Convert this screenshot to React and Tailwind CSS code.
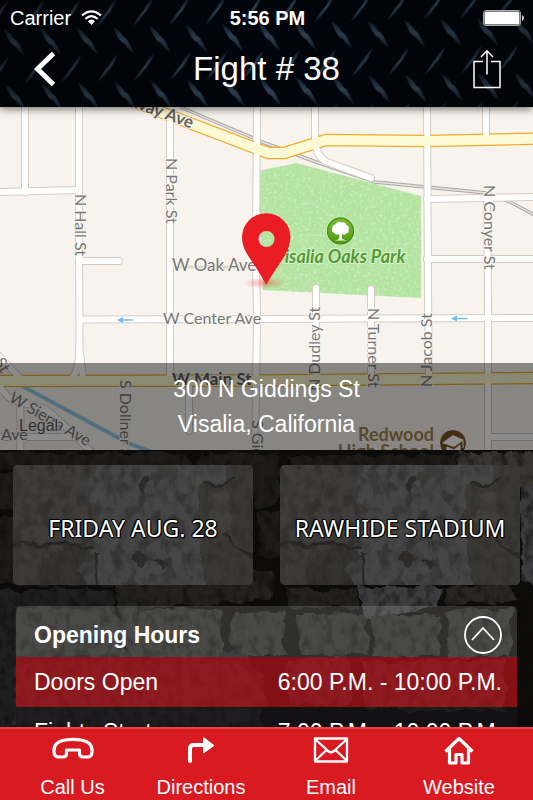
import React from "react";

function DiamondPlate() {
  return (
    <svg className="absolute inset-0 h-full w-full" aria-hidden="true">
      <defs>
        <linearGradient id="blade" x1="0" y1="0" x2="0" y2="1">
          <stop offset="0" stopColor="#0d1a2a" />
          <stop offset="0.45" stopColor="#304255" />
          <stop offset="0.65" stopColor="#263647" />
          <stop offset="1" stopColor="#0b1522" />
        </linearGradient>
        <pattern id="plate" width="36.4" height="55" patternUnits="userSpaceOnUse" patternTransform="rotate(-1.3)">
          <path d="M44 1.500Q38 6 35 12.500L32 16Q28 20 22 30Q29 25 32.500 19.500L35.500 16Q40 11 44 1.500Z" fill="url(#blade)" />
          <path d="M7.600 1.500Q1.600 6 -1.400 12.500L-4.400 16Q-8.400 20 -14.400 30Q-7.400 25 -3.900 19.500L-0.900 16Q3.600 11 7.600 1.500Z" fill="url(#blade)" />
          <path d="M3 29Q10 33 13.500 39.500L16.500 42Q20 47 24 57Q18 53 14.500 47L11 44.500Q7 40 3 29Z" fill="url(#blade)" />
          <path d="M3 -26Q10 -22 13.500 -15.500L16.500 -13Q20 -8 24 2Q18 -2 14.500 -8L11 -10.500Q7 -15 3 -26Z" fill="url(#blade)" />
        </pattern>
        <linearGradient id="plateShade" x1="0" y1="0" x2="1" y2="0">
          <stop offset="0" stopColor="#000" stopOpacity="0.35" />
          <stop offset="0.5" stopColor="#000" stopOpacity="0" />
          <stop offset="1" stopColor="#000" stopOpacity="0.3" />
        </linearGradient>
      </defs>
      <rect width="100%" height="100%" fill="#02050c" />
      <rect width="100%" height="100%" fill="url(#plate)" />
      <rect width="100%" height="100%" fill="url(#plateShade)" />
    </svg>
  );
}

function Wifi() {
  return (
    <svg width="21" height="15" viewBox="0 0 21 15" aria-hidden="true">
      <g fill="none" stroke="#fff" strokeWidth="2.2">
        <path d="M1 5.500Q10.500 -2.800 20 5.500" />
        <path d="M4.300 9Q10.500 3.300 16.700 9" />
      </g>
      <path d="M6.900 11.200Q10.500 7.800 14.100 11.200L10.500 15Z" fill="#fff" />
    </svg>
  );
}

function Battery() {
  return (
    <svg width="42" height="16" viewBox="0 0 42 16" aria-hidden="true">
      <rect x="0.500" y="0.500" width="37" height="15" rx="2.500" fill="none" stroke="#aaa" />
      <rect x="1.500" y="1.500" width="35" height="13" rx="1.500" fill="#fff" />
      <path d="M39 5Q41 6 41 8T39 11Z" fill="#ddd" />
    </svg>
  );
}

function Header() {
  return (
    <header className="relative z-10 h-[107px] shrink-0 text-white shadow-[0_2px_8px_rgba(0,0,0,0.55)]">
      <DiamondPlate />
      <div className="relative grid h-[35px] grid-cols-3 items-center pr-2 pl-[10px] text-[20px] leading-6">
        <span className="flex items-center gap-[10px]">
          Carrier <Wifi />
        </span>
        <span className="text-center font-bold">5:56 PM</span>
        <span className="flex justify-end">
          <Battery />
        </span>
      </div>
      <div className="relative grid h-[67px] grid-cols-[64px_1fr_64px] items-center">
        <button aria-label="Back" className="flex justify-end pr-[8px]">
          <svg width="22" height="34" viewBox="0 0 22 34" aria-hidden="true">
            <path d="M19.500 1.500L3.500 17L19.500 32.500" fill="none" stroke="#fff" strokeWidth="5" />
          </svg>
        </button>
        <h1 className="text-center text-[33px] leading-10">Fight # 38</h1>
        <button aria-label="Share" className="flex pl-1">
          <svg width="28" height="40" viewBox="0 0 28 40" fill="none" stroke="#fff" aria-hidden="true">
            <path d="M10 12.500H1V38.500H27V12.500H18" strokeWidth="1.500" />
            <path d="M14 25.500V2M8 8L14 1.800L20 8" strokeWidth="1.500" />
          </svg>
        </button>
      </div>
    </header>
  );
}

const roads = [
  "M25 100V192",
  "M79 100V192L79.500 350L83 377M79 345Q80 370 72 378",
  "M170 118V377",
  "M257 100L256 255L257 320L255 460",
  "M315 100V140Q316 157 327 162L371 178",
  "M427 100L428 290L429 377",
  "M486 100V138",
  "M487 198L488 300V460",
  "M0 192L78 190",
  "M79 261H119",
  "M81 319.500L533 318",
  "M427 199L533 197",
  "M427 259H533",
  "M316 288V377",
  "M371 289V377",
  "M189 387V431",
  "M-2 355L20 378",
  "M-4 382L8 397L20 402Q21 420 20 460M17 401L45 409Q60 420 95 456",
  "M0 437H80",
  "M488 437H540",
];

function MapArt() {
  const upper = "M124 98L268 153H284L326 140L427 141L540 138.500";
  const main = "M-5 381L250 380.500L540 378";
  return (
    <svg className="block h-full w-full" viewBox="0 107 533 343" preserveAspectRatio="xMidYMid slice" role="img" aria-label="Street map of Visalia">
      <defs>
        <filter id="grass" x="0" y="0" width="100%" height="100%">
          <feTurbulence type="fractalNoise" baseFrequency="0.350" numOctaves="2" seed="4" />
          <feColorMatrix values="0 0 0 0 0.86  0 0 0 0 0.96  0 0 0 0 0.8  0 0 0 3 -1.500" />
          <feComposite in2="SourceGraphic" operator="in" />
        </filter>
        <linearGradient id="tree" x1="0" y1="0" x2="0" y2="1">
          <stop offset="0" stopColor="#7cc03a" />
          <stop offset="1" stopColor="#4d9a10" />
        </linearGradient>
        <radialGradient id="pinGlow">
          <stop offset="0" stopColor="#e22" stopOpacity="0.400" />
          <stop offset="1" stopColor="#e22" stopOpacity="0" />
        </radialGradient>
      </defs>
      <rect y="100" width="533" height="360" fill="#f8f4ed" />
      <path d="M258 171L296 163L421 196V298L263 290Z" fill="#b5e4a2" />
      <path d="M258 171L296 163L421 196V298L263 290Z" fill="#fff" filter="url(#grass)" opacity="0.450" />
      <g fill="none">
        <path d="M180 107L265 143L316 162L375 182L426 187L487 193L512 203L540 218" stroke="#aaa9a7" strokeWidth="3.500" />
        <path d="M180 107L265 143L316 162L375 182L426 187L487 193L512 203L540 218" stroke="#e6e2dd" strokeWidth="1.400" />
        <path d="M22 386L128 443L160 455" stroke="#91cbe6" strokeWidth="4" />
        <path d="M168 267H256" stroke="#ddd5cc" strokeWidth="3" />
        <g strokeLinecap="round" strokeLinejoin="round" stroke="#d5cbc3" strokeWidth="8">
          {roads.map((d) => <path key={d} d={d} />)}
        </g>
        <path d={upper} stroke="#efab2d" strokeWidth="12.500" />
        <path d={main} stroke="#efab2d" strokeWidth="12.500" />
        <g strokeLinecap="round" strokeLinejoin="round" stroke="#fff" strokeWidth="6">
          {roads.map((d) => <path key={d} d={d} />)}
        </g>
        <path d={upper} stroke="#fcfad4" strokeWidth="10" />
        <path d={main} stroke="#fcfad4" strokeWidth="10" />
      </g>
      <g fill="#6ebdf2">
        <path d="M117 320L123 317V319.200H133V320.800H123V323Z" />
        <path d="M451 318.500L457 315.500V317.700H467V319.300H457V321.500Z" />
      </g>
      <g fill="#77777a" stroke="#f9f6f0" strokeWidth="2" paintOrder="stroke" fontSize="16" className="font-['Lato',sans-serif]">
        <text x="172" y="271" fontSize="17">W Oak Ave</text>
        <text x="163" y="324">W Center Ave</text>
        <text transform="translate(75 194) rotate(90)">N Hall St</text>
        <text transform="translate(166 158) rotate(90)">N Park St</text>
        <text transform="translate(484 185) rotate(90)">N Conyer St</text>
        <text transform="translate(320 391) rotate(-90)">N Dudley St</text>
        <text transform="translate(368 308) rotate(90)">N Turner St</text>
        <text transform="translate(432 387) rotate(-90)">N Jacob St</text>
        <text transform="translate(120 380) rotate(90)">S Dollner St</text>
        <text transform="translate(252 420) rotate(90)">S Giddings</text>
        <text transform="translate(-6 362) rotate(58)">St</text>
        <text transform="translate(8 401) rotate(30)">W Sierra Ave</text>
        <text x="1" y="440">Ave</text>
        <text x="19" y="431" fill="#555" className="font-['Liberation_Sans',sans-serif]">Legal</text>
        <text x="172" y="385" fontSize="17" fontWeight="700" fill="#5c5c5f">W Main St</text>
        <text transform="translate(132 107) rotate(20)" fontSize="17" fontWeight="700" fill="#66645c">way Ave</text>
        <text x="273" y="263" fontSize="18" fontWeight="700" fontStyle="italic" fill="#559a34" stroke="#d9f2cd">Visalia Oaks Park</text>
        <g fill="#a28350" fontSize="18" fontWeight="700" textAnchor="end">
          <text x="434" y="441">Redwood</text>
          <text x="434" y="458">High School</text>
        </g>
      </g>
      <g transform="translate(340.500 231)">
        <circle r="14" fill="#fff" />
        <circle r="13" fill="url(#tree)" stroke="#4a9114" strokeWidth="1.500" />
        <path d="M-1.500 8V3Q-5 5 -6 2Q-10 1 -8 -2.500Q-9 -6 -5 -6.500Q-3 -10.500 1 -8.500Q5 -9.500 6 -6Q9.500 -5 8 -1.500Q9 2 5.500 2.500Q4 5 1.500 3V8Q4 8.500 6 9.500H-6Q-3 9 -1.500 8Z" fill="#fff" />
      </g>
      <g transform="translate(453 443)">
        <circle r="13.500" fill="#795426" stroke="#fff" strokeWidth="1" />
        <path d="M-11 0L0 -8L11 -3L1 4Z" fill="#fff" />
        <path d="M-6 4L1 7L7 2V8Q0 13 -6 8ZM10 -2V5" fill="#fff" stroke="#fff" />
      </g>
      <ellipse cx="265" cy="283" rx="22" ry="6" fill="url(#pinGlow)" />
      <path fillRule="evenodd" d="M266 285Q263 278 249 257Q242 247 242 237A24 23.500 0 0 1 290.500 237Q290 247 284 257Q270 278 266 285ZM266.500 231A8 8 0 1 0 266.500 247A8 8 0 1 0 266.500 231Z" fill="#eb1d24" />
    </svg>
  );
}

function MapSection() {
  return (
    <section className="relative h-[343px] shrink-0 overflow-hidden">
      <MapArt />
      <address className="absolute inset-x-0 bottom-0 h-[87px] bg-black/45 pt-[9px] text-center text-[23px] leading-[35px] text-white not-italic">
        300 N Giddings St
        <br />
        Visalia, California
      </address>
    </section>
  );
}

function StoneFilters() {
  return (
    <svg width="0" height="0" className="absolute" aria-hidden="true">
      <defs>
        <filter id="rough" x="-5%" y="-5%" width="110%" height="110%" colorInterpolationFilters="sRGB">
          <feTurbulence type="fractalNoise" baseFrequency="0.060" numOctaves="4" seed="8" result="n" />
          <feDisplacementMap in="SourceGraphic" in2="n" scale="12" xChannelSelector="R" yChannelSelector="G" />
        </filter>
        <filter id="grain" x="0" y="0" width="100%" height="100%" colorInterpolationFilters="sRGB">
          <feTurbulence type="fractalNoise" baseFrequency="0.120 0.080" numOctaves="5" seed="3" />
          <feColorMatrix values="0 0 0 0 0.050  0 0 0 0 0.045  0 0 0 0 0.040  3 0 0 0 -1.300" />
        </filter>
        <filter id="flake" x="0" y="0" width="100%" height="100%" colorInterpolationFilters="sRGB">
          <feTurbulence type="fractalNoise" baseFrequency="0.080 0.060" numOctaves="5" seed="21" result="t" />
          <feColorMatrix in="t" values="0 0 0 0 0.190  0 0 0 0 0.185  0 0 0 0 0.170  9 0 0 0 -4.700" result="c" />
          <feComposite in="c" in2="SourceGraphic" operator="in" />
        </filter>
      </defs>
    </svg>
  );
}

function StoneWall() {
  return (
    <svg className="absolute inset-0 h-full w-full" viewBox="0 0 533 277" preserveAspectRatio="xMidYMin slice" aria-hidden="true">
      <rect width="533" height="350" fill="#0d0c0b" />
      <g filter="url(#rough)">
        <g fill="#1c1b19">
          <path d="M-10 2L185 2L192 14L188 22L-10 20ZM-10 24H190V60H-10ZM-10 68H180V135H-10ZM200 3H280L278 55L256 60L250 20H195ZM290 5H455V18L300 28ZM258 62H310L305 115L260 105Z" />
          <path d="M120 140L255 118L273 122L272 147L120 155Z" />
        </g>
        <path d="M-10 140H112L116 168L100 182L10 200V350H-10ZM10 200H250L270 350H0Z" fill="#1f1f20" />
        <path d="M115 135H245L270 120V150L170 155L118 160ZM285 138L355 140L358 158L290 158Z" fill="#22211d" />
        <path d="M455 2H540V60L525 40L500 18H458Z" fill="#37352e" />
        <path d="M355 136H445L438 155L365 170ZM520 35H540V140L525 130Z" fill="#3c3c3e" />
        <path d="M445 138L505 134L520 150L450 155Z" fill="#292722" />
        <path d="M15 158H108L125 175V207H15ZM118 158H222V207H130ZM235 163L285 160V205H245L228 190ZM298 164L365 163L368 205L300 206ZM372 165H438L440 205H374ZM446 160H512V207H448Z" fill="#2a2a27" />
        <path d="M15 212H235L262 225L268 255L250 275H15ZM285 212L350 206L352 255L288 255ZM362 210H505V260H365Z" fill="#2b2827" />
        <path d="M18 280H260V350H18ZM290 280H533V350H290Z" fill="#1b1a1c" />
      </g>
      <rect width="533" height="350" filter="url(#grain)" opacity="0.550" />
    </svg>
  );
}

function CardStone() {
  return (
    <svg className="absolute inset-0 h-full w-full" viewBox="0 0 240 120" preserveAspectRatio="none" aria-hidden="true">
      <rect width="240" height="120" fill="#3c3b3a" />
      <g filter="url(#rough)">
        <path d="M-15 -15H82L78 78H-15Z" fill="#3e3d3c" />
        <path d="M75 -15H215L210 16L190 20L183 45L190 78L192 135H82Z" fill="#464647" />
        <path d="M187 22L212 18L225 -15H260V135H194L188 75L182 50Z" fill="#393833" />
        <path d="M200 28L216 28L218 62L205 75L196 55Z" fill="#41403c" />
        <path d="M27 112Q30 88 55 82Q78 78 85 98V135H30Z" fill="#343331" />
        <path d="M65 102L84 92V124H72Z" fill="#414142" />
        <path d="M-10 82Q50 76 82 84" fill="none" stroke="#292826" strokeWidth="3" />
        <path d="M84 88V125M190 20L210 19L224 10M212 68L230 86L250 94" fill="none" stroke="#292826" strokeWidth="3" />
        <path d="M116 94Q122 86 130 88L134 96L126 102ZM130 10L135 16L133 28L128 18ZM140 96L160 98L150 103Z" fill="#2e2c2a" />
      </g>
      <rect width="180" height="120" fill="#fff" filter="url(#flake)" opacity="0.500" />
      <rect width="240" height="120" filter="url(#grain)" opacity="0.150" />
    </svg>
  );
}

const outline =
  "[text-shadow:1px_0_#000,-1px_0_#000,0_1px_#000,0_-1px_#000,1px_1px_1px_#000,-1px_-1px_1px_#000]";

function InfoCard({ children }) {
  return (
    <div className="relative flex h-[120px] flex-1 items-center justify-center overflow-hidden rounded-[5px]">
      <CardStone />
      <p className={"relative pt-[6px] font-['Noto_Sans',sans-serif] text-[23px] leading-8 whitespace-nowrap text-white " + outline}>
        {children}
      </p>
    </div>
  );
}

function HoursPanel() {
  return (
    <section className="relative mx-4 mt-[21px] overflow-hidden rounded-t-[5px] text-[23px] leading-[50px] text-white">
      <div className="flex h-[51px] items-center justify-between bg-white/15 pt-[6px] pr-[15px] pl-[18px]">
        <h2 className="font-bold">Opening Hours</h2>
        <button aria-label="Collapse opening hours">
          <svg width="38" height="38" viewBox="0 0 38 38" fill="none" stroke="#fff" strokeWidth="1.800" aria-hidden="true">
            <circle cx="19" cy="19" r="18" />
            <path d="M8 24L19 12L30 24" />
          </svg>
        </button>
      </div>
      <dl>
        <div className="flex h-[50px] justify-between bg-[#c3141c]/65 pr-[15px] pl-[18px]">
          <dt>Doors Open</dt>
          <dd>6:00 P.M. - 10:00 P.M.</dd>
        </div>
        <div className="flex h-[50px] justify-between bg-[#17161a]/60 pr-[15px] pl-[18px]">
          <dt>Fights Start</dt>
          <dd>7:00 P.M. - 10:00 P.M.</dd>
        </div>
      </dl>
    </section>
  );
}

const tabs = [
  {
    label: "Call Us",
    icon: (
      <path d="M2 15Q1 5 13 3Q21 1.800 29 3Q41 5 40 15Q40 20 35 20H31Q27.500 20 27.500 16.500V13H14.500V16.500Q14.500 20 11 20H7Q2 20 2 15Z" strokeWidth="3.200" />
    ),
  },
  {
    label: "Directions",
    icon: (
      <>
        <path d="M10 24V11.500Q10 8 13.500 8H25" strokeWidth="4" strokeLinecap="round" />
        <path d="M23.500 0.500L34 8.500L23.500 16Z" fill="#fff" strokeWidth="1" />
      </>
    ),
  },
  {
    label: "Email",
    icon: <path d="M5 1.500H37V24.500H5ZM5 2L18 14Q21 16.500 24 14L37 2M5 24L16.500 13M37 24L25.500 13" strokeWidth="2.300" />,
  },
  {
    label: "Website",
    icon: <path d="M7.500 14.500L21 1.500L34.500 14.500M11.500 12V26H18V17.500H24V26H30.500V12" strokeWidth="3.200" />,
  },
];

function TabBar() {
  return (
    <nav className="relative z-10 grid h-[73px] shrink-0 grid-cols-[145fr_112fr_148fr_108fr_20fr] border-t-2 border-[#e9434a] bg-[#d91a21] text-white">
      {tabs.map((tab) => (
        <button key={tab.label} className="flex flex-col items-center pt-[8px] text-[20px] leading-6">
          <svg width="42" height="28" viewBox="0 0 42 28" fill="none" stroke="#fff" strokeLinejoin="round" aria-hidden="true">
            {tab.icon}
          </svg>
          <span className="pt-[10px]">{tab.label}</span>
        </button>
      ))}
    </nav>
  );
}

export default function App() {
  return (
    <div className="flex h-screen flex-col overflow-hidden bg-black font-['Liberation_Sans',Arial,sans-serif]">
      <StoneFilters />
      <Header />
      <MapSection />
      <main className="relative min-h-0 flex-1 overflow-hidden">
        <StoneWall />
        <div className="flex gap-[27px] px-[13px] pt-[15px]">
          <InfoCard>FRIDAY AUG. 28</InfoCard>
          <InfoCard>RAWHIDE STADIUM</InfoCard>
        </div>
        <HoursPanel />
      </main>
      <TabBar />
    </div>
  );
}
